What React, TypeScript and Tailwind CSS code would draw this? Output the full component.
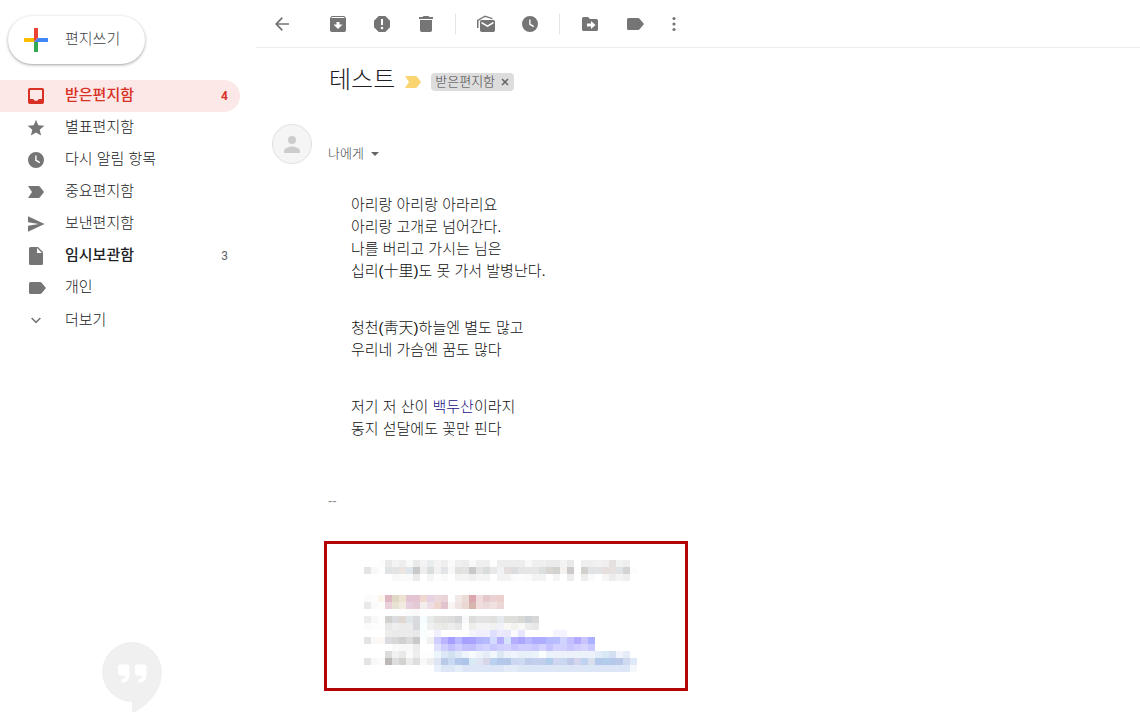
import type { ReactNode } from "react";
import clsx from "clsx";

type IconProps = {
  className?: string;
  children: ReactNode;
};

const Icon = ({ className, children }: IconProps) => (
  <svg
    viewBox="0 0 20 20"
    fill="currentColor"
    aria-hidden="true"
    className={clsx("size-5 shrink-0", className)}
  >
    {children}
  </svg>
);

const LABEL_PATH =
  "M3 5.500Q3 4 4.500 4H14q1 0 1.600.7L20 10l-4.400 5.300q-.6.7-1.600.7H4.500Q3 16 3 14.500z";
const IMPORTANT_PATH = "M2 4h10.500q1 0 1.500.8L18 10l-4 5.200q-.5.8-1.500.8H2l4-6z";
const CLOCK_PATH =
  "M10 2a8 8 0 1 0 0 16 8 8 0 0 0 0-16zm3.400 11.200L9.200 10.700V5.500h1.400v4.300l3.500 2.200z";

const icons = {
  back: (
    <path d="M17 9.200H6.200l4.700-4.900L9.700 3.100 3 10l6.700 6.900 1.200-1.200-4.700-4.900H17z" />
  ),
  archive: (
    <path
      fillRule="evenodd"
      d="M4 2h12q.5 0 .8.4L18 4v12.300q0 1.700-1.700 1.700H3.700Q2 18 2 16.300V4l1.200-1.600Q3.500 2 4 2zm0 1-.7 1h13.400L16 3zm4.500 5v2.500H5.500L10 15l4.500-4.500h-3V8z"
    />
  ),
  spam: (
    <path
      fillRule="evenodd"
      d="M6.700 2h6.600L18 6.700v6.600L13.300 18H6.700L2 13.300V6.700zM9 5v6h2V5zm1 7.700a1.300 1.300 0 1 0 0 2.600 1.300 1.300 0 0 0 0-2.600z"
    />
  ),
  trash: <path d="M7.500 2h5l1 1H17v2H3V3h3.500zM4 6h12v10.300q0 1.700-1.700 1.700H5.700Q4 18 4 16.300z" />,
  unread: (
    <>
      <path d="M1 14V6l8-4.500L16.500 4v1.200L9 3 2.500 6.800V14z" />
      <path
        fillRule="evenodd"
        d="M5.500 6h11.800q1.700 0 1.700 1.700v8.600q0 1.700-1.700 1.700H5.700Q4 18 4 16.300V7.500Q4 6 5.500 6zM5.500 7.800v1.700l6 3.500 6-3.500V7.800l-6 3.500z"
      />
    </>
  ),
  clock: <path fillRule="evenodd" d={CLOCK_PATH} />,
  move: (
    <path
      fillRule="evenodd"
      d="M3.600 3H8l2 2h6.400Q18 5 18 6.600v8.800q0 1.600-1.600 1.600H3.600Q2 17 2 15.400V4.600Q2 3 3.600 3zM11 7v2.500H7v3h4V15l4.500-4z"
    />
  ),
  label: <path d={LABEL_PATH} />,
  more: (
    <>
      <circle cx="10" cy="4.500" r="1.600" />
      <circle cx="10" cy="10" r="1.600" />
      <circle cx="10" cy="15.500" r="1.600" />
    </>
  ),
  inbox: (
    <path
      fillRule="evenodd"
      d="M3.800 2h12.400Q18 2 18 3.800v12.400q0 1.800-1.800 1.800H3.800Q2 18 2 16.200V3.800Q2 2 3.800 2zm.2 2v9h3.300a2.900 2.900 0 0 0 5.400 0H16V4z"
    />
  ),
  star: (
    <path d="m10 1.800 2.300 5.500 6 .5-4.600 3.900 1.400 5.800-5.100-3.100-5.100 3.100 1.400-5.800-4.600-3.900 6-.5z" />
  ),
  important: <path d={IMPORTANT_PATH} />,
  send: <path d="M2 2.200 18.500 10 2 17.800v-6L13 10 2 8.200z" />,
  draft: (
    <path
      fillRule="evenodd"
      d="M4.500 1H12l5 5v11.400q0 1.600-1.600 1.600H4.600Q3 19 3 17.400V2.500Q3 1 4.500 1zM11 2v5h5z"
    />
  ),
  expand: <path d="m6.200 7.500 3.800 3.800 3.800-3.800 1.100 1.100-4.900 4.900-4.900-4.900z" />,
};

type IconName = keyof typeof icons;

type Folder = {
  name: string;
  icon: IconName;
  count?: number;
  active?: boolean;
  unread?: boolean;
};

const folders: Folder[] = [
  { name: "받은편지함", icon: "inbox", count: 4, active: true },
  { name: "별표편지함", icon: "star" },
  { name: "다시 알림 항목", icon: "clock" },
  { name: "중요편지함", icon: "important" },
  { name: "보낸편지함", icon: "send" },
  { name: "임시보관함", icon: "draft", count: 3, unread: true },
  { name: "개인", icon: "label" },
];

const toolbarGroups: { label: string; icon: IconName }[][] = [
  [
    { label: "보관처리", icon: "archive" },
    { label: "스팸신고", icon: "spam" },
    { label: "삭제", icon: "trash" },
  ],
  [
    { label: "읽지않은 상태로 표시", icon: "unread" },
    { label: "다시 알림", icon: "clock" },
  ],
  [
    { label: "이동", icon: "move" },
    { label: "라벨", icon: "label" },
  ],
];

const poem: ReactNode[][] = [
  [
    "아리랑 아리랑 아라리요",
    "아리랑 고개로 넘어간다.",
    "나를 버리고 가시는 님은",
    "십리(十里)도 못 가서 발병난다.",
  ],
  ["청천(靑天)하늘엔 별도 많고", "우리네 가슴엔 꿈도 많다"],
  [
    <>
      저기 저 산이 <span className="text-[#1c0f85]">백두산</span>이라지
    </>,
    "동지 섣달에도 꽃만 핀다",
  ],
];

// One string per mosaic row, one colour per tile, "-" leaves a tile empty
const mosaic = [
  "- - fdfdfd e9e9e9 f3f3f3 eeeeee f8f8f8 e9eaea f3f3f3 e9eded f3f3f3 eeeeee fafafa efefef ededed f8f8f8 efefef efefef fdfdfd ededed ededed ededed ededed f8f8f8 efefef efefef ebebeb ebebeb f3f3f3 e9e9e9 - efefef efefef f3f0f0 efefef e4e0e0 f0f1f1 eeeeee",
  "e4e4e4 f8f8f8 fdfdfd e0e3e3 e4e4e7 ece4e1 dfe5ec c8c8c8 eeeeee dadede f1f1f1 e3e4e8 f8f8f8 e0e0dd e3e3e3 c8c9ca e4e4e4 d9dcdc e8e8e8 f0f2f4 e4dfdd dcdde0 e5e5e5 e5e7e5 e6e6e6 dbdfdf d9d6d2 d2d3cf f4f1ef cccaca fcfdfc d2d0cd e0e2e4 e2e3e7 e6dfdd e6e0de dfe3e5 d3d3d3 fcfcfc",
  "- - - - f8f8f8 fafafa fafafa ebebeb - f5f5f5 fdfdfd f9f9f9 - f4f4f4 f4f4f4 efefef f5f5f5 f4f4f4 - f3f3f3 f3f3f3 fbfbfb fdfdfd fbfbfb f3f3f3 f3f3f3 - f5f5f5 - ededed - ededed fafafa - f6f6f6 ececec f3f3f3 eeeeee",
  "-",
  "-",
  "fbfbfb fdfdfd fdf5ec dfb7c2 e1d7c5 efe3d3 e4c4d4 e4c4d0 efd8d0 e6d2e0 ecd9dd ecd3d7 - f2e8e8 ebdbd6 dba6ae f0dcdc e4c8ca ecd2d2 ecd0ce",
  "e9e9e9 fafafa fdfdfb ead0d8 e8e2d4 f2e9e0 e6cfdf e4cad4 f3eeee eddde7 efd6cd e2c2ce f9f5f3 f0e4e2 ebd8d3 d6b5ac f0dede ecdada f0e0de ebd8d6",
  "- - - - fdfdfd fdfdfd fcfbfb fafafa",
  "ededed f8f8f8 fdfdfd d1d1cf dadcdf dfd8d3 dfe5e8 d9dadd f5fdff e9ebeb e2e1e0 dfdfde dddddd d4d7da f7f9fa dcdcdb e3e3e4 e2e2e1 e0e1df e7eaec dfdfda dedfdc d8d9d5 ced2d6 d8d8d8",
  "fbfbfb fdfdfd fdfdfd e8e8e8 efefef ebebeb ebebeb d8dadd f9ffff f0f0f0 ebebe9 e9e9e7 ededed e6e6e6 fdfdfd eeedeb f3f3f3 f4f4f4 f1f1ef eff3f9 faf8f5 f3f2ee f8f8f7 ececec e8e8e8",
  "- - - ededed eaeaea ebebeb ebebeb e8e8e8 f9fdff fdfdfd f1f1fd - - - - f4f4fd efeffd efeffd dedeff ebe9fd e9e7fd fafaff e6e6ff - - - - f4f3ff f4f3ff",
  "e4e4e4 f8f8f8 fdf8f4 dadcdf d7d9d9 d0d0d0 dbdbdb c9c9ca fdffff f1f1f1 d0cdff b9b5ff a69fff bbb9ff a8a0ff a9a2ff b3b4ff b4bcff d3dcff b8aeff d5e4fb b5aeff aca8ff bab9ff afabff b0acff b6bbff b8bdff d0d2ff c3c0ff b4aaff c9c3ff aab2ff",
  "- - - - fbfafa f8f8f8 f8f6f7 ececec - - e2e0ff d0ceff c2bfff cfcdff c3c0ff c1bfff cdceff d2d3ff c9c7ff d0cdff d3d1ff c9c6ff d0ceff cfcdff c9c7ff d4d2ff c5c1ff d3d1ff d2d0ff c8c5ff d0ceff d6d3ff c9c7ff",
  "- - - dcdcdb f1f1f1 e9e9e9 fafafa eeeeee fdfdfd fdfdfd ecf4fb dce8f5 d2e1f0 dfe8f6 eff5fc f8fbfd eef3fb e5edf7 f3f7fc dce7f4 ecf2fb eff5fc e7f0f9 e8f0f9 eaf2fa fbfdff ecf2fa ecf2fa ecf2fa ecf2fa ecf2fa ecf2fa ecf2fa e2ebf8 d8e9f5 d5dff4 f1f4fb e5ecf9",
  "e4e4e4 f8f8f8 fcfcfc bbb8b7 dedede d3d3d1 ececec dedede f8f8fa efefef e0e5f3 bccaea c8d9f1 b2c7ea aec5ea d9eaf7 e0e5f3 d7d6e8 b9d0ee b5c8ea b5c7e8 cbd7f0 cedaf2 bfcdea c3cfec c1cfec b0cdec d0d6f0 c9d7f1 bfcaea d4d5ec bfd3f0 dadfee b3c8ea b2cdec b7c9ea bbc9e8 cfdaf0 dfe8f7",
  "- - - - - - - - - - e9f0fb dce6f7 dce6f7 e5edf9 dce6f7 dce6f7 dce6f7 dce6f7 dce6f7 dce6f7 e3ebf8 e3ebf8 dce6f7 dce6f7 dce6f7 dce6f7 dce6f7 dce6f7 dce6f7 dce6f7 dce6f7 dce6f7 dce6f7 dce6f7 dce6f7 dce6f7 dce6f7 dce6f7 f4f7fc",
];

const Sidebar = () => (
  <aside className="flex w-64 shrink-0 flex-col justify-between">
    <div>
      <div className="px-2 pt-4 pb-4">
        <button
          type="button"
          className="flex h-12 w-[137px] items-center rounded-full bg-white pl-4 text-[15px] font-light text-[#3c4043] shadow-[0_1px_2px_0_rgba(60,64,67,0.3),0_1px_3px_1px_rgba(60,64,67,0.15)]"
        >
          <svg viewBox="0 0 24 24" className="mr-[17px] size-6" aria-hidden="true">
            <path fill="#ea4335" d="M10 0h4v10l-4 4z" />
            <path fill="#4285f4" d="M14 10h10v4H10z" />
            <path fill="#34a853" d="M10 14h4v10h-4z" />
            <path fill="#fbbc04" d="M0 10h10v4H0z" />
          </svg>
          <span className="pb-0.5">편지쓰기</span>
        </button>
      </div>
      <nav className="w-60 text-[15px] font-light text-[#202124]">
        {folders.map(({ name, icon, count, active, unread }) => (
          <a
            key={name}
            href="#"
            className={clsx(
              "flex h-8 items-center rounded-r-full pr-3 pl-[26px]",
              active && "bg-[#fce8e6] text-[#d93025]",
              (active || unread) && "font-medium"
            )}
          >
            <Icon className={clsx("mr-[19px]", !active && "text-[#757575]")}>
              {icons[icon]}
            </Icon>
            <span className="flex-1 pb-0.5">{name}</span>
            {count && (
              <span
                className={clsx(
                  "font-[Roboto,sans-serif] text-xs",
                  active ? "font-bold" : "font-normal text-[#5f6368]"
                )}
              >
                {count}
              </span>
            )}
          </a>
        ))}
        <button type="button" className="flex h-8 w-full items-center pl-[26px]">
          <Icon className="mr-[19px] text-[#757575]">{icons.expand}</Icon>
          더보기
        </button>
      </nav>
    </div>
    <svg viewBox="0 0 60 70" className="ml-[102px] h-[70px] w-[60px]" aria-hidden="true">
      <path
        fill="#f0f0f0"
        stroke="#e8e8e8"
        strokeWidth="0.5"
        d="M30 .5A29.500 29.500 0 0 0 30 59.500h.500V71C46 63 59.500 49 59.500 30A29.500 29.500 0 0 0 30 .5z"
      />
      <path
        fill="#fff"
        d="M18 22.500h7.500q2 0 2 2V33q0 7-8 8v-3.500q3.500-.5 4-4H18q-2 0-2-2v-7q0-2 2-2zM35 22.500h7.500q2 0 2 2V33q0 7-8 8v-3.500q3.500-.5 4-4H35q-2 0-2-2v-7q0-2 2-2z"
      />
    </svg>
  </aside>
);

const Toolbar = () => (
  <div className="flex h-12 items-center border-b border-[#ececec] pl-4 text-[#757575]">
    <button type="button" aria-label="뒤로" className="mr-9">
      <Icon>{icons.back}</Icon>
    </button>
    {toolbarGroups.map((group, i) => (
      <div key={i} className="flex items-center">
        {i > 0 && <span className="mr-5 ml-[19px] h-5 w-px bg-[#e5e5e5]" />}
        <div className="flex gap-6">
          {group.map(({ label, icon }) => (
            <button key={label} type="button" aria-label={label}>
              <Icon>{icons[icon]}</Icon>
            </button>
          ))}
        </div>
      </div>
    ))}
    <button type="button" aria-label="더보기" className="ml-5">
      <Icon>{icons.more}</Icon>
    </button>
  </div>
);

const Mosaic = () => (
  <svg
    viewBox="0 0 273 112"
    shapeRendering="crispEdges"
    className="h-28 w-[273px]"
    aria-hidden="true"
  >
    {mosaic.map((row, y) =>
      row
        .split(" ")
        .map((color, x) =>
          color === "-" ? null : (
            <rect
              key={`${x}-${y}`}
              x={x * 7}
              y={y * 7}
              width="7"
              height="7"
              fill={`#${color}`}
            />
          )
        )
    )}
  </svg>
);

const Message = () => (
  <article className="px-4">
    <header className="flex items-center pt-4 pl-[57px]">
      <h1 className="text-2xl font-light text-[#202124]">테스트</h1>
      <Icon className="mt-1 ml-2 text-[#f9d470]">{icons.important}</Icon>
      <span className="mt-1 ml-2 flex h-[18px] items-center rounded bg-[#ddd] px-1 text-[13px] font-light text-[#444]">
        받은편지함
        <button type="button" aria-label="라벨 삭제" className="ml-[5px]">
          <svg viewBox="0 0 10 10" className="size-2.5" aria-hidden="true">
            <path d="m2 2 6 6m0-6-6 6" stroke="#666" strokeWidth="1.600" />
          </svg>
        </button>
      </span>
    </header>

    <div className="mt-7 flex">
      <svg viewBox="0 0 40 40" className="mr-4 size-10" aria-hidden="true">
        <circle cx="20" cy="20" r="19.500" fill="#f5f5f5" stroke="#e0e0e0" />
        <circle cx="20" cy="16" r="4" fill="#ccc" />
        <path fill="#ccc" d="M12 29v-2c0-3 5-4.500 8-4.500s8 1.500 8 4.500v2z" />
      </svg>
      <button
        type="button"
        className="mt-5 flex h-5 items-center text-[13px] font-light text-[#444]"
      >
        나에게
        <svg viewBox="0 0 8 4" className="ml-[7px] h-1 w-2" aria-hidden="true">
          <path fill="#666" d="M0 0h8L4 4z" />
        </svg>
      </button>
    </div>

    <div className="mt-[30px] flex flex-col gap-[35px] pl-[79px] text-[15px] leading-[22px] font-light text-[#111]">
      {poem.map((verse, i) => (
        <p key={i}>
          {verse.map((line, j) => (
            <span key={j} className="block">
              {line}
            </span>
          ))}
        </p>
      ))}
    </div>

    <p className="mt-[51px] pl-14 text-[13px] leading-5 text-[#888]">--</p>

    <div className="mt-[30px] ml-[52px] w-[364px] border-[3px] border-[#b30505] pt-4 pb-4 pl-[37px]">
      <Mosaic />
    </div>
  </article>
);

const App = () => (
  <div className="flex min-h-screen bg-white font-['Liberation_Sans','Noto_Sans_CJK_KR',sans-serif]">
    <Sidebar />
    <main className="min-w-0 flex-1">
      <Toolbar />
      <Message />
    </main>
  </div>
);

export default App;
